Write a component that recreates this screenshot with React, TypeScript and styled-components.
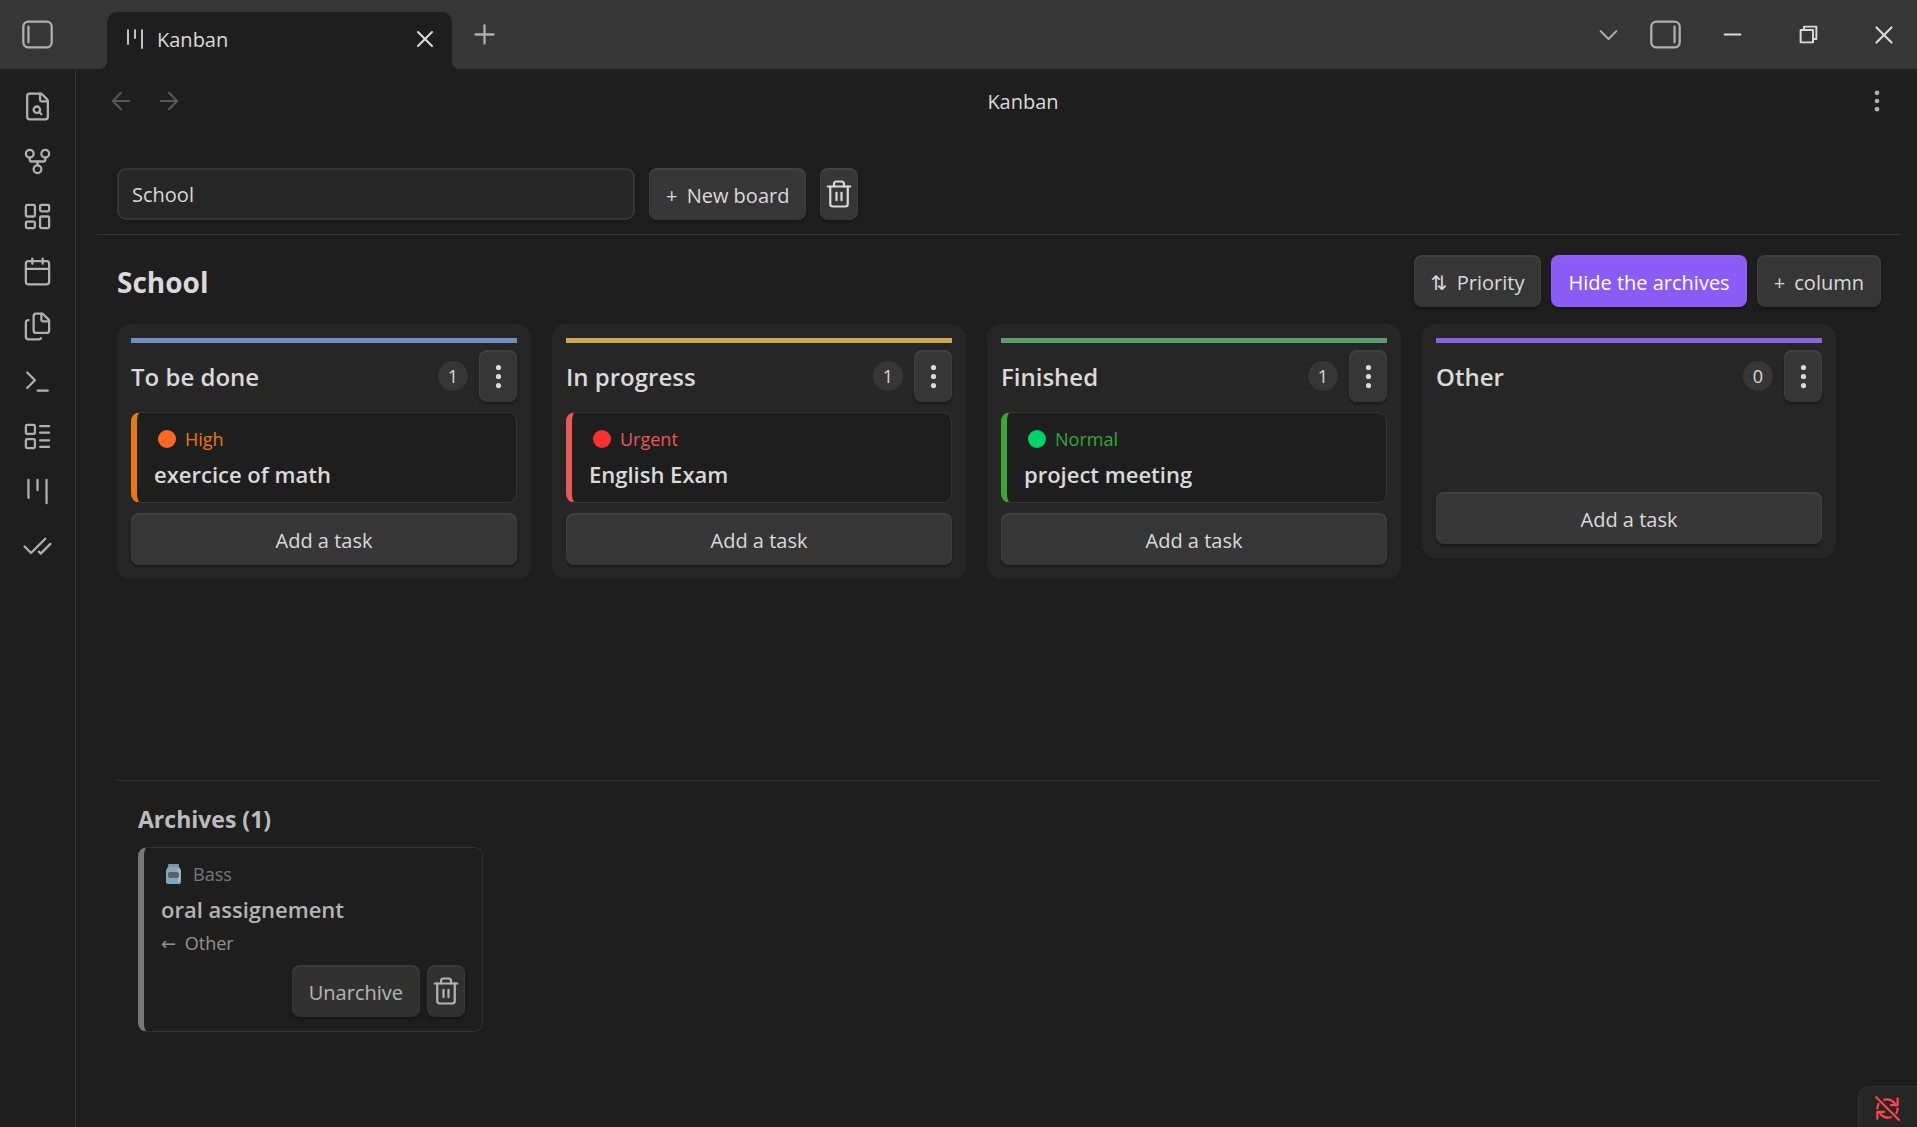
import React from "react";
import styled, { createGlobalStyle } from "styled-components";

const color = {
  base: "#1e1e1e",
  raised: "#262626",
  control: "#363636",
  line: "#363636",
  text: "#dadada",
  muted: "#b0b0b0",
  faint: "#585858",
  accent: "#8a5cf5",
};

const GlobalStyle = createGlobalStyle`
  *, *::before, *::after { box-sizing: border-box; }
  body {
    margin: 0;
    background: ${color.base};
    color: ${color.text};
    font-family: "Open Sans", "Noto Sans", "DejaVu Sans", sans-serif;
    font-size: 20px;
    line-height: 28px;
  }
  button, select { font: inherit; color: inherit; }
  h1, h2, h3, p, ul { margin: 0; padding: 0; }
`;

const icons = {
  fileSearch: [
    "M6 22a2 2 0 0 1-2-2V4a2 2 0 0 1 2-2h8a2.4 2.4 0 0 1 1.704.706l3.588 3.588A2.4 2.4 0 0 1 20 8v12a2 2 0 0 1-2 2z",
    "M14 2v5a1 1 0 0 0 1 1h5",
    "M14 14.5a2.5 2.5 0 1 1-5 0a2.5 2.5 0 1 1 5 0",
    "M13.3 16.3 15 18",
  ],
  fork: [
    "M15 18a3 3 0 1 1-6 0a3 3 0 1 1 6 0",
    "M9 6a3 3 0 1 1-6 0a3 3 0 1 1 6 0",
    "M21 6a3 3 0 1 1-6 0a3 3 0 1 1 6 0",
    "M18 9v2c0 .6-.4 1-1 1H7c-.6 0-1-.4-1-1V9",
    "M12 12v3",
  ],
  dashboard: [
    "M4 3h5a1 1 0 0 1 1 1v7a1 1 0 0 1-1 1H4a1 1 0 0 1-1-1V4a1 1 0 0 1 1-1z",
    "M15 3h5a1 1 0 0 1 1 1v3a1 1 0 0 1-1 1h-5a1 1 0 0 1-1-1V4a1 1 0 0 1 1-1z",
    "M15 12h5a1 1 0 0 1 1 1v7a1 1 0 0 1-1 1h-5a1 1 0 0 1-1-1v-7a1 1 0 0 1 1-1z",
    "M4 16h5a1 1 0 0 1 1 1v3a1 1 0 0 1-1 1H4a1 1 0 0 1-1-1v-3a1 1 0 0 1 1-1z",
  ],
  calendar: [
    "M8 2v4",
    "M16 2v4",
    "M5 4h14a2 2 0 0 1 2 2v14a2 2 0 0 1-2 2H5a2 2 0 0 1-2-2V6a2 2 0 0 1 2-2z",
    "M3 10h18",
  ],
  files: [
    "M15 2h-4a2 2 0 0 0-2 2v11a2 2 0 0 0 2 2h8a2 2 0 0 0 2-2V8",
    "M16.706 2.706A2.4 2.4 0 0 0 15 2v5a1 1 0 0 0 1 1h5a2.4 2.4 0 0 0-.706-1.706z",
    "M5 7a2 2 0 0 0-2 2v11a2 2 0 0 0 2 2h8a2 2 0 0 0 1.732-1",
  ],
  terminal: ["M12 19h8", "m4 17 6-6-6-6"],
  layoutList: [
    "M4 3h5a1 1 0 0 1 1 1v5a1 1 0 0 1-1 1H4a1 1 0 0 1-1-1V4a1 1 0 0 1 1-1z",
    "M4 14h5a1 1 0 0 1 1 1v5a1 1 0 0 1-1 1H4a1 1 0 0 1-1-1v-5a1 1 0 0 1 1-1z",
    "M14 4h7",
    "M14 9h7",
    "M14 15h7",
    "M14 20h7",
  ],
  kanban: ["M5 3v14", "M12 3v8", "M19 3v18"],
  checks: ["M18 6 7 17l-5-5", "m22 10-7.5 7.5L13 16"],
  panelLeft: [
    "M5 2h14a4 4 0 0 1 4 4v12a4 4 0 0 1-4 4H5a4 4 0 0 1-4-4V6a4 4 0 0 1 4-4z",
    "M5 6v12",
  ],
  panelRight: [
    "M5 2h14a4 4 0 0 1 4 4v12a4 4 0 0 1-4 4H5a4 4 0 0 1-4-4V6a4 4 0 0 1 4-4z",
    "M19 6v12",
  ],
  close: ["M18 6 6 18", "m6 6 12 12"],
  plus: ["M5 12h14", "M12 5v14"],
  chevron: ["m5 9 7 7 7-7"],
  arrowLeft: ["m12 19-7-7 7-7", "M19 12H5"],
  arrowRight: ["M5 12h14", "m12 5 7 7-7 7"],
  trash: [
    "M3 6h18",
    "M19 6v14a2 2 0 0 1-2 2H7a2 2 0 0 1-2-2V6",
    "M8 6V4a2 2 0 0 1 2-2h4a2 2 0 0 1 2 2v2",
    "M10 11v6",
    "M14 11v6",
  ],
  minimize: ["M5 12h14"],
  restore: ["M5 8h11v11H5z", "M8 8V5h11v11h-3"],
  syncOff: [
    "M2 2l20 20",
    "M9 4.2A8.500 8.500 0 0 1 19 8.500",
    "M21 3v6h-6",
    "M15 19.800A8.500 8.500 0 0 1 5 15.500",
    "M3 21v-6h6",
    "M3 12a9 9 0 0 1 1-4",
    "M21 12a9 9 0 0 1-1 4",
  ],
};

type IconName = keyof typeof icons;

const Svg = styled.svg`
  display: block;
  flex: none;
  fill: none;
  stroke: currentColor;
  stroke-linecap: round;
  stroke-linejoin: round;
`;

function Icon({ name, size, stroke = 1.75 }: { name: IconName; size: number; stroke?: number }) {
  return (
    <Svg width={size} height={size} viewBox="0 0 24 24" strokeWidth={stroke} aria-hidden="true">
      {icons[name].map((d) => (
        <path key={d} d={d} />
      ))}
    </Svg>
  );
}

function Dots({ size, radius }: { size: number; radius: number }) {
  return (
    <Svg width={size} height={size} viewBox="0 0 24 24" strokeWidth={0} aria-hidden="true">
      {[5, 12, 19].map((y) => (
        <circle key={y} cx={12} cy={y} r={radius} fill="currentColor" />
      ))}
    </Svg>
  );
}

function Jar() {
  return (
    <Svg width={19} height={22} viewBox="0 0 19 22" strokeWidth={0} aria-hidden="true">
      <rect x="3" y="1" width="11" height="3" rx="1" fill="#a3b1b9" />
      <path d="M3 4h11l2 3v12a2 2 0 0 1-2 2H3a2 2 0 0 1-2-2V7z" fill="#9cc9e6" />
      <path d="M13 5h1l1 2v12h-2z" fill="#cfe6f3" />
      <rect x="3" y="9" width="11" height="6" rx="2" fill="#64727c" />
    </Svg>
  );
}

const Page = styled.div`
  display: flex;
  flex-direction: column;
  min-height: 100vh;
`;

const TitleBar = styled.header`
  display: flex;
  align-items: center;
  height: 69px;
  padding: 0 8px 0 22px;
  background: ${color.control};
  color: ${color.muted};
`;

const IconButton = styled.button<{ $tone?: string; $width?: number }>`
  display: flex;
  align-items: center;
  justify-content: center;
  width: ${(p) => (p.$width ? `${p.$width}px` : "auto")};
  padding: 0;
  border: 0;
  background: none;
  color: ${(p) => p.$tone ?? "inherit"};
`;

const Tab = styled.div`
  position: relative;
  display: flex;
  align-items: center;
  align-self: flex-end;
  width: 345px;
  height: 57px;
  margin: 0 17px 0 54px;
  padding: 0 13px 3px 16px;
  border-radius: 10px 10px 0 0;
  background: ${color.base};
  color: ${color.text};

  &::before,
  &::after {
    content: "";
    position: absolute;
    bottom: 0;
    width: 8px;
    height: 8px;
  }
  &::before {
    right: 100%;
    background: radial-gradient(circle at 0 0, transparent 8px, ${color.base} 8px);
  }
  &::after {
    left: 100%;
    background: radial-gradient(circle at 100% 0, transparent 8px, ${color.base} 8px);
  }
`;

const TabLabel = styled.span`
  flex: 1;
  margin-left: 10px;
  padding-top: 2px;
`;

const WindowTools = styled.div`
  display: flex;
  align-items: center;
  gap: 26px;
  margin-left: auto;
`;

const Shell = styled.div`
  display: grid;
  flex: 1;
  grid-template-columns: 76px minmax(0, 1fr);
`;

const Ribbon = styled.nav`
  display: flex;
  flex-direction: column;
  padding-top: 10px;
  border-right: 1px solid ${color.line};
  color: ${color.muted};
`;

const RibbonButton = styled(IconButton)`
  height: 55px;
`;

const View = styled.main`
  display: flex;
  flex-direction: column;
`;

const ViewHeader = styled.div`
  display: flex;
  align-items: center;
  height: 64px;
  padding: 0 26px 0 31px;
`;

const History = styled.div`
  display: flex;
  gap: 20px;
`;

const ViewTitle = styled.div`
  flex: 1;
  padding-top: 2px;
  text-align: center;
`;

const Content = styled.div`
  padding: 35px 16px 0 21px;
`;

const Toolbar = styled.div`
  display: flex;
  gap: 14px;
  padding: 0 20px 14px;
  border-bottom: 1px solid ${color.line};
`;

const BoardSelect = styled.select`
  flex: 0 1 518px;
  height: 52px;
  padding: 1px 13px 0;
  border: 2px solid ${color.line};
  border-radius: 9px;
  background: ${color.raised};
  box-shadow: 0 2px 3px rgba(0, 0, 0, 0.2);
  appearance: none;
`;

const Button = styled.button<{ $primary?: boolean; $square?: boolean; $block?: boolean }>`
  display: flex;
  align-items: center;
  justify-content: center;
  width: ${(p) => (p.$square ? "38px" : p.$block ? "100%" : "auto")};
  height: 52px;
  padding: ${(p) => (p.$square ? "0" : "3px 17px 0")};
  border: 0;
  border-radius: 8px;
  background: ${(p) => (p.$primary ? color.accent : color.control)};
  color: ${(p) => (p.$primary ? "#ffffff" : "inherit")};
  box-shadow:
    inset 0 1px 1px 1px rgba(255, 255, 255, ${(p) => (p.$primary ? 0.04 : 0.06)}),
    0 2px 3px rgba(0, 0, 0, 0.35);
  white-space: pre;
`;

const Lead = styled.span`
  margin-right: 4px;
`;

const Board = styled.section`
  padding: 20px 20px 0;
`;

const BoardHeader = styled.div`
  display: flex;
  align-items: center;
  gap: 10px;
  margin-bottom: 17px;
`;

const BoardTitle = styled.h1`
  flex: 1;
  padding-top: 2px;
  font-size: 28px;
  font-weight: 700;
  line-height: 36px;
`;

const Columns = styled.div`
  display: flex;
  align-items: flex-start;
  gap: 21px;
  min-height: 456px;
`;

const ColumnBox = styled.section`
  flex: 0 1 414px;
  padding: 14px;
  border-radius: 14px;
  background: ${color.raised};
`;

const ColumnHeader = styled.div<{ $tone: string }>`
  display: flex;
  align-items: center;
  margin-bottom: 10px;
  padding-top: 7px;
  border-top: 5px solid ${(p) => p.$tone};
`;

const ColumnTitle = styled.h2`
  flex: 1;
  padding-top: 2px;
  font-size: 24px;
  font-weight: 600;
  line-height: 32px;
`;

const Count = styled.span`
  min-width: 30px;
  margin-right: 11px;
  border-radius: 15px;
  background: ${color.control};
  font-size: 18px;
  line-height: 30px;
  text-align: center;
`;

const CardList = styled.div`
  min-height: 70px;
  margin-bottom: 10px;
`;

const Card = styled.article<{ $tone: string }>`
  padding: 14px 17px 14px 17px;
  border: 1px solid ${color.line};
  border-left: 6px solid ${(p) => p.$tone};
  border-radius: 9px;
  background: ${color.base};
`;

const Priority = styled.p<{ $tone: string }>`
  display: flex;
  align-items: center;
  gap: 9px;
  margin-bottom: 9px;
  padding-left: 4px;
  color: ${(p) => p.$tone};
  font-size: 18px;
  font-weight: 500;
  line-height: 24px;
`;

const Dot = styled.span<{ $tone: string }>`
  width: 18px;
  height: 18px;
  border-radius: 50%;
  background: ${(p) => p.$tone};
`;

const CardTitle = styled.h3`
  font-size: 22px;
  font-weight: 600;
  line-height: 28px;
`;

const Archives = styled.section`
  padding: 22px 21px 40px;
  border-top: 1px solid ${color.line};
`;

const ArchivesTitle = styled.h2`
  margin-bottom: 12px;
  color: #bcbcbc;
  font-size: 23px;
  font-weight: 700;
  line-height: 32px;
`;

const ArchivedCard = styled(Card)`
  width: 345px;
  opacity: 0.8;
`;

const Origin = styled.p`
  margin: 8px 0 10px;
  color: ${color.muted};
  font-size: 18px;
  line-height: 24px;
`;

const Actions = styled.div`
  display: flex;
  justify-content: flex-end;
  gap: 7px;
`;

const StatusBar = styled.footer`
  position: fixed;
  right: 0;
  bottom: 0;
  padding: 8px 16px 5px 15px;
  border: 1px solid #303030;
  border-width: 1px 0 0 1px;
  border-radius: 12px 0 0 0;
  background: ${color.raised};
  color: #fb464c;
`;

const ribbonItems: { icon: IconName; label: string }[] = [
  { icon: "fileSearch", label: "Open quick switcher" },
  { icon: "fork", label: "Open graph view" },
  { icon: "dashboard", label: "Create new canvas" },
  { icon: "calendar", label: "Open daily note" },
  { icon: "files", label: "Insert template" },
  { icon: "terminal", label: "Open command palette" },
  { icon: "layoutList", label: "Create new base" },
  { icon: "kanban", label: "Open Kanban" },
  { icon: "checks", label: "Tasks" },
];

interface Task {
  priority: string;
  tone: string;
  dot: string;
  title: string;
}

const columns: { title: string; tone: string; tasks: Task[] }[] = [
  {
    title: "To be done",
    tone: "#6f8fc2",
    tasks: [{ priority: "High", tone: "#e8790e", dot: "#ff6723", title: "exercice of math" }],
  },
  {
    title: "In progress",
    tone: "#cfa950",
    tasks: [{ priority: "Urgent", tone: "#eb5757", dot: "#fa3131", title: "English Exam" }],
  },
  {
    title: "Finished",
    tone: "#5a9e6f",
    tasks: [{ priority: "Normal", tone: "#3ba53b", dot: "#00d26a", title: "project meeting" }],
  },
  { title: "Other", tone: "#8a63e0", tasks: [] },
];

export default function App() {
  return (
    <Page>
      <GlobalStyle />
      <TitleBar>
        <IconButton aria-label="Toggle left sidebar">
          <Icon name="panelLeft" size={31} />
        </IconButton>
        <Tab>
          <Icon name="kanban" size={24} />
          <TabLabel>Kanban</TabLabel>
          <IconButton aria-label="Close tab">
            <Icon name="close" size={28} />
          </IconButton>
        </Tab>
        <IconButton aria-label="New tab">
          <Icon name="plus" size={31} />
        </IconButton>
        <WindowTools>
          <IconButton aria-label="Tab list" $width={31}>
            <Icon name="chevron" size={27} />
          </IconButton>
          <IconButton aria-label="Toggle right sidebar">
            <Icon name="panelRight" size={31} />
          </IconButton>
          <IconButton aria-label="Minimize" $width={50} $tone={color.text}>
            <Icon name="minimize" size={27} />
          </IconButton>
          <IconButton aria-label="Restore" $width={50} $tone={color.text}>
            <Icon name="restore" size={27} />
          </IconButton>
          <IconButton aria-label="Close window" $width={50} $tone={color.text}>
            <Icon name="close" size={30} />
          </IconButton>
        </WindowTools>
      </TitleBar>

      <Shell>
        <Ribbon>
          {ribbonItems.map((item) => (
            <RibbonButton key={item.icon} aria-label={item.label}>
              <Icon name={item.icon} size={31} />
            </RibbonButton>
          ))}
        </Ribbon>

        <View>
          <ViewHeader>
            <History>
              <IconButton aria-label="Back" $tone={color.faint}>
                <Icon name="arrowLeft" size={28} />
              </IconButton>
              <IconButton aria-label="Forward" $tone={color.faint}>
                <Icon name="arrowRight" size={28} />
              </IconButton>
            </History>
            <ViewTitle>Kanban</ViewTitle>
            <IconButton aria-label="More options" $tone={color.muted}>
              <Dots size={28} radius={2} />
            </IconButton>
          </ViewHeader>

          <Content>
            <Toolbar>
              <BoardSelect aria-label="Board">
                <option>School</option>
              </BoardSelect>
              <Button>
                <Lead>+</Lead> New board
              </Button>
              <Button $square aria-label="Delete board">
                <Icon name="trash" size={30} />
              </Button>
            </Toolbar>

            <Board>
              <BoardHeader>
                <BoardTitle>School</BoardTitle>
                <Button>
                  <Lead>⇅</Lead> Priority
                </Button>
                <Button $primary>Hide the archives</Button>
                <Button>
                  <Lead>+</Lead> column
                </Button>
              </BoardHeader>

              <Columns>
                {columns.map((column) => (
                  <ColumnBox key={column.title}>
                    <ColumnHeader $tone={column.tone}>
                      <ColumnTitle>{column.title}</ColumnTitle>
                      <Count>{column.tasks.length}</Count>
                      <Button $square aria-label={`${column.title} options`}>
                        <Dots size={31} radius={2} />
                      </Button>
                    </ColumnHeader>
                    <CardList>
                      {column.tasks.map((task) => (
                        <Card key={task.title} $tone={task.tone}>
                          <Priority $tone={task.tone}>
                            <Dot $tone={task.dot} />
                            {task.priority}
                          </Priority>
                          <CardTitle>{task.title}</CardTitle>
                        </Card>
                      ))}
                    </CardList>
                    <Button $block>Add a task</Button>
                  </ColumnBox>
                ))}
              </Columns>

              <Archives>
                <ArchivesTitle>Archives (1)</ArchivesTitle>
                <ArchivedCard $tone="#8f8f8f">
                  <Priority $tone="#8f8f8f">
                    <Jar />
                    Bass
                  </Priority>
                  <CardTitle>oral assignement</CardTitle>
                  <Origin>
                    <Lead>←</Lead> Other
                  </Origin>
                  <Actions>
                    <Button>Unarchive</Button>
                    <Button $square aria-label="Delete task">
                      <Icon name="trash" size={30} />
                    </Button>
                  </Actions>
                </ArchivedCard>
              </Archives>
            </Board>
          </Content>
        </View>
      </Shell>

      <StatusBar aria-label="Sync is off">
        <Icon name="syncOff" size={27} stroke={2} />
      </StatusBar>
    </Page>
  );
}
